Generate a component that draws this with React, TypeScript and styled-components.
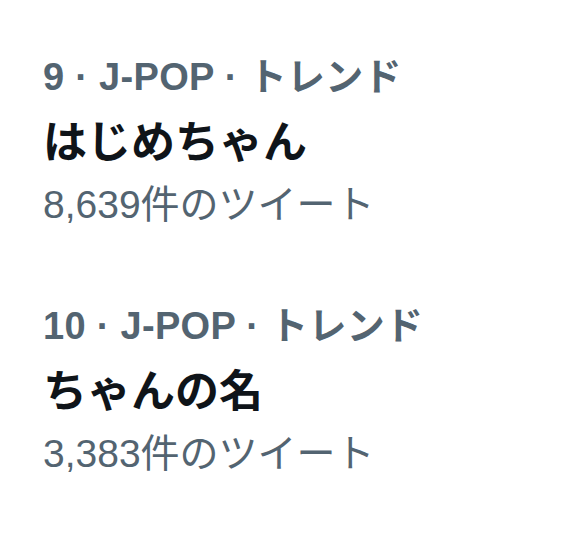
import styled, { createGlobalStyle } from "styled-components";

const GlobalStyle = createGlobalStyle`
  html, body {
    margin: 0;
    padding: 0;
    background: #ffffff;
  }
  body {
    font-family: "Liberation Sans", "Noto Sans CJK JP", sans-serif;
  }
`;

const TrendList = styled.div`
  width: 578px;
  height: 546px;
  display: flex;
  flex-direction: column;
  padding: 49px 0 0 43px;
  box-sizing: border-box;
  gap: 68px;
`;

const TrendItem = styled.div`
  display: flex;
  flex-direction: column;
`;

const Meta = styled.div`
  color: #536471;
  font-size: 38px;
  font-weight: 700;
  line-height: 56px;
  letter-spacing: 0.3px;
`;

const Title = styled.div`
  color: #0f1419;
  font-size: 44px;
  font-weight: 700;
  line-height: 75px;
`;

const Count = styled.div`
  color: #536471;
  font-size: 39px;
  font-weight: 400;
  line-height: 50px;
`;

interface Trend {
  rank: number;
  category: string;
  name: string;
  tweets: string;
}

const trends: Trend[] = [
  { rank: 9, category: "J-POP", name: "はじめちゃん", tweets: "8,639" },
  { rank: 10, category: "J-POP", name: "ちゃんの名", tweets: "3,383" },
];

const App = () => {
  return (
    <>
      <GlobalStyle />
      <TrendList>
        {trends.map((t) => (
          <TrendItem key={t.rank}>
            <Meta>
              {t.rank} · {t.category} · トレンド
            </Meta>
            <Title>{t.name}</Title>
            <Count>{t.tweets}件のツイート</Count>
          </TrendItem>
        ))}
      </TrendList>
    </>
  );
};

export default App;
